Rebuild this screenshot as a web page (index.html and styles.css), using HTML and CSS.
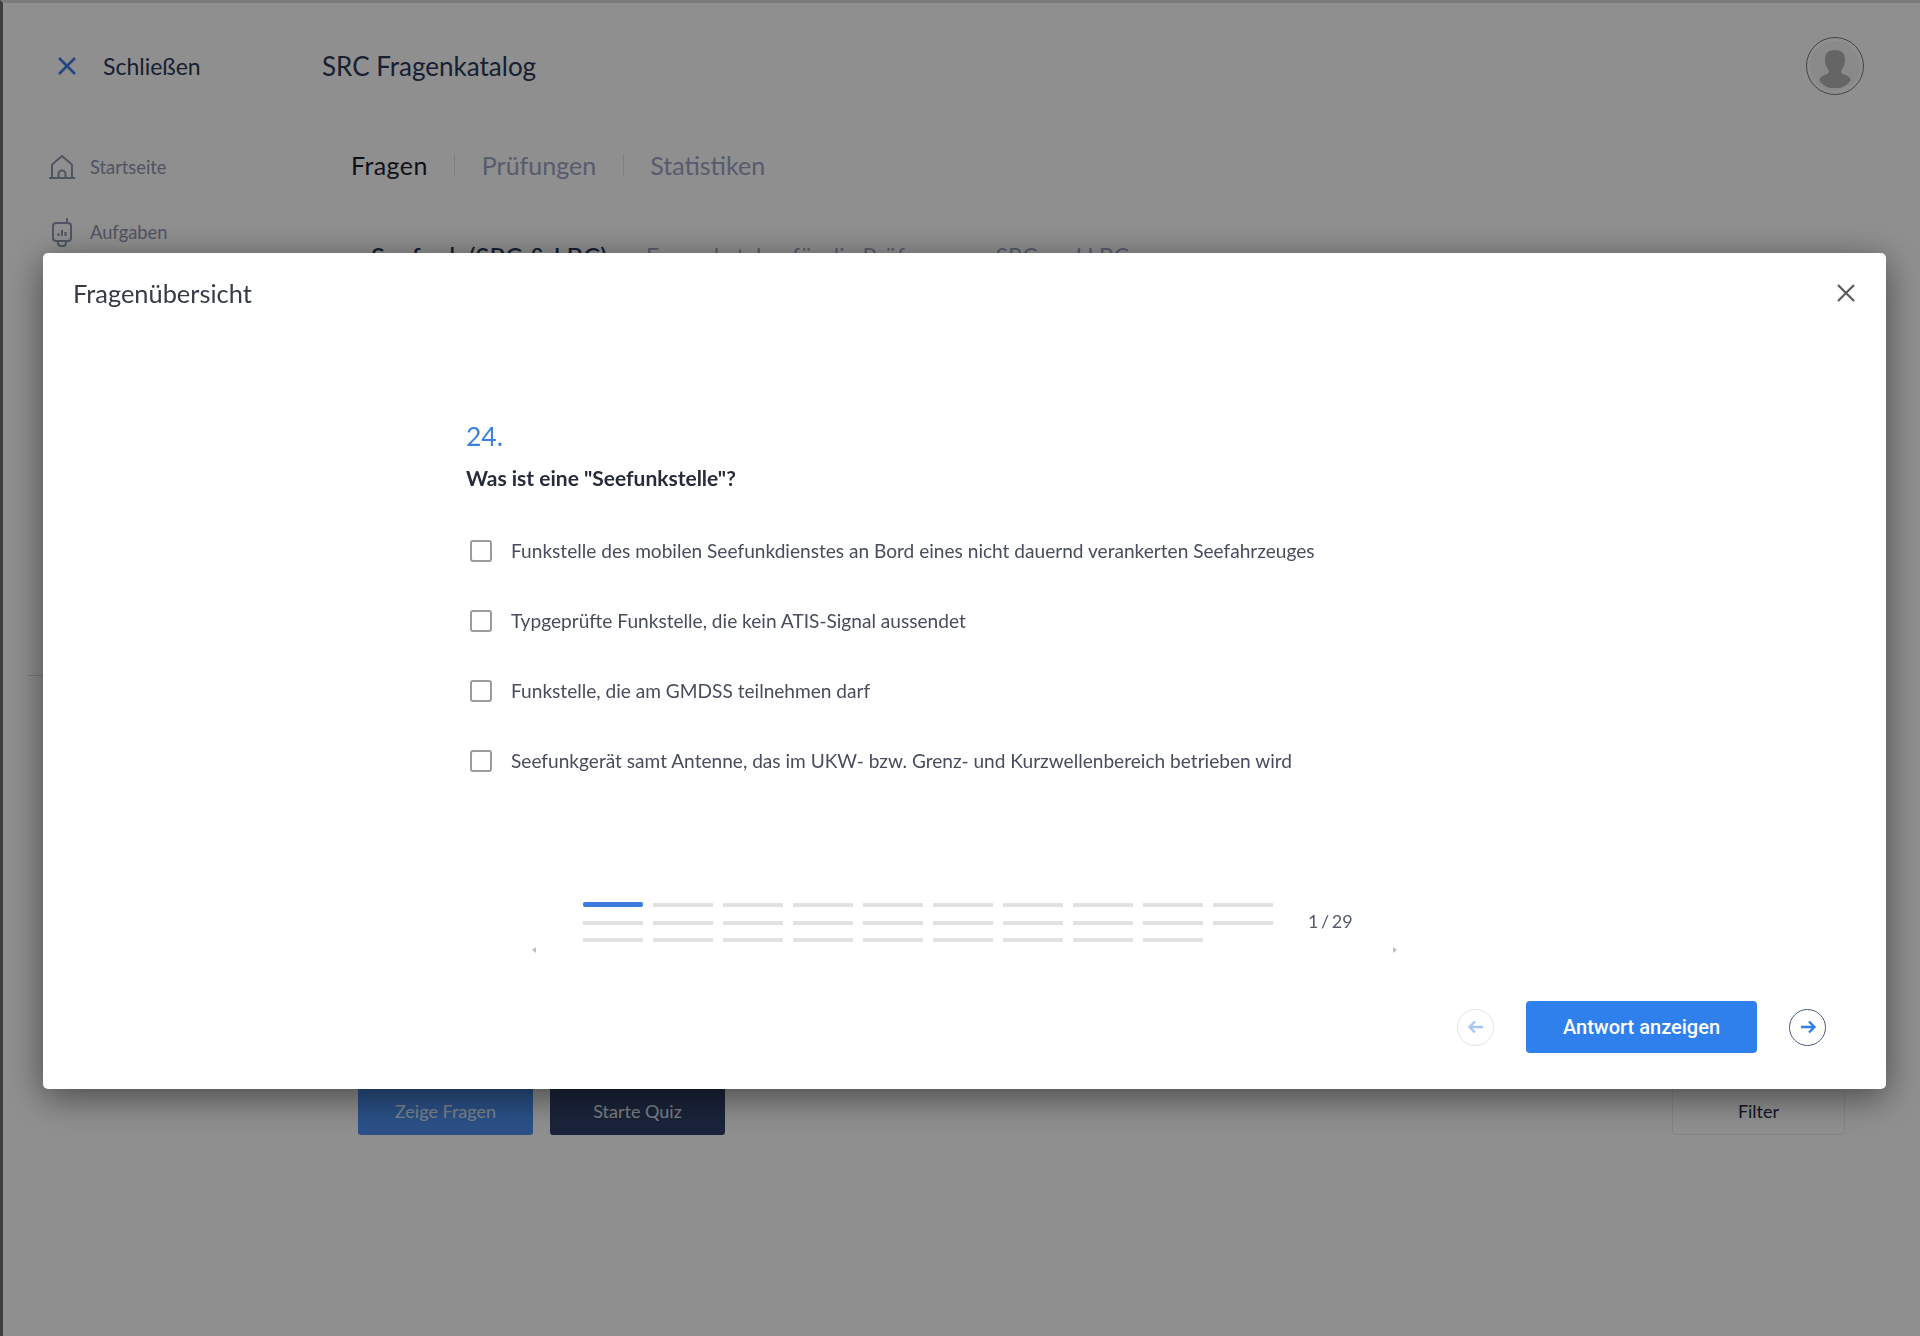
FILE: index.html
```html
<!DOCTYPE html>
<html lang="de">
<head>
    <meta charset="UTF-8">
    <title>SRC Fragenkatalog</title>
    <link rel="stylesheet" href="styles.css">
</head>
<body>

<!-- seite unter dem dialog -->
<div class="page">
    <div class="topbar">
        <a class="close-link">
            <svg class="close-icon" viewBox="0 0 18 18"><path d="M1 1l16 16M17 1L1 17"/></svg>
            <span>Schließen</span>
        </a>
        <span class="app-title">SRC Fragenkatalog</span>
        <div class="avatar">
            <div class="avatar-inner">
                <svg viewBox="0 0 44 44"><path d="M12 15c0-6 4-9 10-9s10 3 10 9c0 4-1 8-3 10-1 2-1 4 1 5 4 1 7 3 8 6-3 5-10 9-16 9s-13-4-16-9c1-3 4-5 8-6 2-1 2-3 1-5-2-2-3-6-3-10z"/></svg>
            </div>
        </div>
    </div>
    <div class="content">
        <div class="sidebar">
            <div class="nav">
                <div class="nav-item">
                    <svg class="nav-icon" viewBox="0 0 26 30"><path d="M0 26h26M3 26V13.500a2 2 0 0 1 .7-1.500L13 4l9.300 8a2 2 0 0 1 .7 1.500V26M9.500 26v-4a3.500 3.500 0 0 1 7 0v4"/></svg>
                    <span>Startseite</span>
                </div>
                <div class="nav-item">
                    <svg class="nav-icon" viewBox="0 0 26 30"><path d="M18 6V1M7 6h12a3 3 0 0 1 3 3v12a3 3 0 0 1-3 3H7a3 3 0 0 1-3-3V9a3 3 0 0 1 3-3zM9 24v2a3 3 0 0 0 3 3h2a3 3 0 0 0 3-3v-2M9.500 19v-3M13 19v-6M16.500 19v-4"/></svg>
                    <span>Aufgaben</span>
                </div>
            </div>
            <div class="side-line"></div>
        </div>
        <div class="main">
            <div class="tabs">
                <span class="tab active">Fragen</span>
                <i class="tab-sep"></i>
                <span class="tab">Prüfungen</span>
                <i class="tab-sep"></i>
                <span class="tab">Statistiken</span>
            </div>
            <div class="section-head">
                <b>Seefunk (SRC &amp; LBC)</b>
                <span>Fragenkatalog für die Prüfung zum SRC und LBC</span>
            </div>
            <div class="actions">
                <a class="btn btn-blue">Zeige Fragen</a>
                <a class="btn btn-navy">Starte Quiz</a>
                <a class="btn btn-filter">Filter</a>
            </div>
        </div>
    </div>
</div>

<!-- dialog -->
<div class="overlay">
    <div class="modal">
        <div class="modal-head">
            <span>Fragenübersicht</span>
            <svg class="modal-close" viewBox="0 0 18 18"><path d="M1 1l16 16M17 1L1 17"/></svg>
        </div>
        <div class="quiz">
            <div class="q-number">24.</div>
            <div class="q-text">Was ist eine "Seefunkstelle"?</div>
            <div class="options">
                <label class="option"><i class="check"></i><span>Funkstelle des mobilen Seefunkdienstes an Bord eines nicht dauernd verankerten Seefahrzeuges</span></label>
                <label class="option"><i class="check"></i><span>Typgeprüfte Funkstelle, die kein ATIS-Signal aussendet</span></label>
                <label class="option"><i class="check"></i><span>Funkstelle, die am GMDSS teilnehmen darf</span></label>
                <label class="option"><i class="check"></i><span>Seefunkgerät samt Antenne, das im UKW- bzw. Grenz- und Kurzwellenbereich betrieben wird</span></label>
            </div>
            <div class="progress">
                <div class="bars" id="bars"></div>
                <span class="count">1 / 29</span>
                <i class="tri tri-left"></i>
                <i class="tri tri-right"></i>
            </div>
        </div>
        <div class="modal-foot">
            <div class="round round-off">
                <svg viewBox="0 0 18 18"><path d="M16 9H3M8 3.500L2.500 9 8 14.500"/></svg>
            </div>
            <button class="answer">Antwort anzeigen</button>
            <div class="round">
                <svg viewBox="0 0 18 18"><path d="M2 9h13M10 3.500L15.500 9 10 14.500"/></svg>
            </div>
        </div>
    </div>
</div>

<script>
    // 29 fragen, die erste ist aktiv
    var bars = document.getElementById('bars');
    for (var i = 0; i < 29; i++) {
        var bar = document.createElement('i');
        bar.className = i === 0 ? 'bar current' : 'bar';
        bars.appendChild(bar);
    }
</script>
</body>
</html>
```
FILE: styles.css
```css
* {
    box-sizing: border-box;
}
body {
    margin: 0;
    height: 1336px;
    overflow: hidden;
    background-color: #fff;
    font-family: Lato, "Open Sans", sans-serif;
    color: #2b3858;
}

.page {
    height: 1336px;
    border-left: 3px solid #6f6f6f;
    border-top: 3px solid #dcdcdc;
}
.topbar {
    display: flex;
    align-items: center;
    height: 126px;
    padding: 0 56px 0 55px;
}
.close-link {
    display: flex;
    align-items: center;
    gap: 27px;
    width: 264px;
    font-size: 23px;
}
.close-icon {
    width: 18px;
    height: 18px;
    fill: none;
    stroke: #3f7fe8;
    stroke-width: 2.6;
}
.app-title {
    font-size: 26px;
}
.avatar {
    display: flex;
    align-items: center;
    justify-content: center;
    margin-left: auto;
    width: 58px;
    height: 58px;
    border: 1px solid #7a7a7a;
    border-radius: 50%;
}
.avatar-inner {
    overflow: hidden;
    width: 50px;
    height: 50px;
    padding: 3px;
    background-color: #f6f6f6;
    border-radius: 50%;
}
.avatar-inner svg {
    display: block;
    fill: #b5b5b5;
}

.content {
    display: flex;
}
.sidebar {
    width: 348px;
}
.nav {
    display: flex;
    flex-direction: column;
    gap: 25px;
    padding: 18px 0 0 46px;
}
.nav-item {
    display: flex;
    align-items: center;
    gap: 15px;
    height: 40px;
    color: #8c96ae;
    font-size: 18.3px;
}
.nav-item span {
    padding-bottom: 1px;
}
.nav-icon {
    width: 26px;
    height: 30px;
    fill: none;
    stroke: #8c96ae;
    stroke-width: 2;
}
.side-line {
    margin: 423px 0 0 25px;
    width: 200px;
    height: 1px;
    background-color: #d8d8d8;
}

.main {
    flex: 1;
    padding-right: 75px;
}
.tabs {
    display: flex;
    align-items: center;
    margin-top: 18px;
    height: 36px;
    color: #9aa5c2;
    font-size: 25px;
}
.tab.active {
    color: #1c1f2a;
    letter-spacing: .4px;
}
.tab-sep {
    margin: 0 26.500px;
    width: 1px;
    height: 22px;
    background-color: #e6e6e6;
}
.section-head {
    display: flex;
    align-items: center;
    gap: 39px;
    margin-top: 58px;
    padding-left: 20px;
    height: 30px;
    font-size: 22.800px;
}
.section-head b {
    font-size: 25.500px;
    font-weight: 500;
}
.section-head span {
    color: #9aa5c2;
}
.actions {
    display: flex;
    gap: 17px;
    margin: 816px 0 0 7px;
}
.btn {
    display: flex;
    align-items: center;
    justify-content: center;
    width: 175px;
    height: 48px;
    border-radius: 3px;
    font-size: 18px;
}
.btn-blue {
    background-color: #4c90f0;
    color: #dfe9f8;
}
.btn-navy {
    background-color: #2f3f68;
    color: #dfe3ea;
}
.btn-filter {
    margin-left: auto;
    width: 173px;
    color: #1f2a44;
    border: 1px solid #ececec;
}

.overlay {
    position: fixed;
    top: 0;
    left: 0;
    width: 100%;
    height: 100%;
    padding: 253px 34px 0 43px;
    background-color: rgba(0, 0, 0, .44);
}
.modal {
    display: flex;
    flex-direction: column;
    height: 836px;
    background-color: #fff;
    border-radius: 5px;
    box-shadow: 0 8px 36px rgba(0, 0, 0, .5);
}
.modal-head {
    display: flex;
    align-items: center;
    justify-content: space-between;
    height: 80px;
    padding: 0 31px 0 30px;
    color: #363b46;
    font-size: 25.400px;
}
.modal-close {
    width: 18px;
    height: 18px;
    fill: none;
    stroke: #5a5a5a;
    stroke-width: 2.200;
}
.quiz {
    padding: 86px 0 0 423px;
}
.q-number {
    height: 34px;
    color: #3b82dc;
    font-size: 26.500px;
    line-height: 34px;
}
.q-text {
    margin-top: 11px;
    height: 28px;
    color: #262c3a;
    font-size: 21px;
    font-weight: 700;
    line-height: 28px;
}
.options {
    margin-top: 24px;
}
.option {
    display: flex;
    align-items: center;
    gap: 19px;
    margin-left: 4px;
    height: 70px;
    color: #474d5c;
    font-size: 19.100px;
}
.option span {
    padding-bottom: 2px;
}
.check {
    width: 22px;
    height: 22px;
    border: 2px solid #9c9c9c;
    border-radius: 3px;
}
.progress {
    position: relative;
    display: flex;
    margin: 107px 0 0 65px;
    padding-left: 52px;
    width: 866px;
    height: 50px;
}
.bars {
    display: grid;
    grid-template-columns: repeat(10, 60px);
    grid-auto-rows: 4px;
    gap: 13.500px 10px;
    width: 690px;
}
.bar {
    background-color: #e2e2e2;
}
.bar.current {
    margin-top: -1px;
    height: 5px;
    background-color: #3a7bdc;
    border-radius: 2px;
}
.count {
    margin: 7px 0 0 35px;
    color: #555c6c;
    font-size: 18px;
    word-spacing: -2px;
}
.tri {
    position: absolute;
    bottom: 0;
    border-style: solid;
    border-width: 3px 4px;
    border-color: transparent;
}
.tri-left {
    left: -3px;
    border-right-color: #bdbdbd;
}
.tri-right {
    right: -4px;
    border-left-color: #bdbdbd;
}
.modal-foot {
    display: flex;
    align-items: center;
    justify-content: flex-end;
    gap: 32px;
    margin-top: auto;
    padding: 0 60px 36px 0;
}
.answer {
    width: 231px;
    height: 52px;
    border: 0;
    border-radius: 4px;
    background-color: #2f80ed;
    color: #fff;
    font-family: Roboto, sans-serif;
    font-size: 20px;
    font-weight: 500;
}
.round {
    display: flex;
    align-items: center;
    justify-content: center;
    width: 37px;
    height: 37px;
    border: 1px solid #4a5a78;
    border-radius: 50%;
}
.round svg {
    width: 18px;
    height: 18px;
    fill: none;
    stroke: #2f80ed;
    stroke-width: 2.400;
}
.round-off {
    border-color: #dde3ec;
}
.round-off svg {
    stroke: #a9c6ee;
}
```
